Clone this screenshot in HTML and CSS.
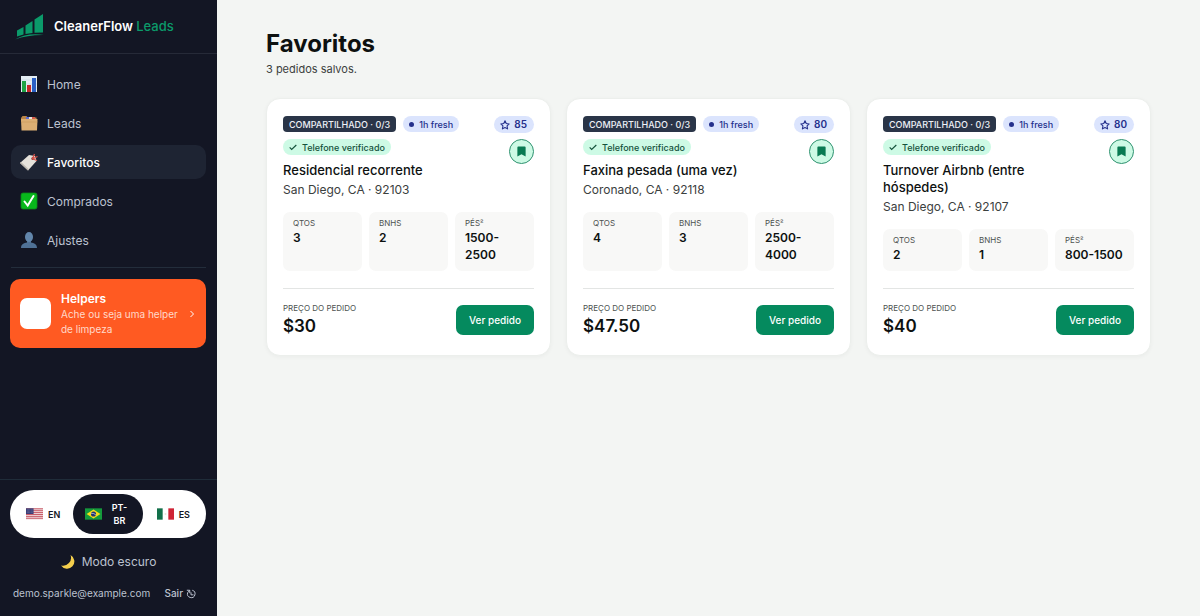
FILE: index.html
```html
<!DOCTYPE html>
<html lang="pt-BR">
<head>
    <meta charset="UTF-8">
    <meta name="viewport" content="width=device-width, initial-scale=1.0">
    <title>Favoritos - CleanerFlow Leads</title>
    <link rel="stylesheet" href="styles.css">
</head>
<body>
    <!-- shared icons -->
    <svg class="sprite" aria-hidden="true">
        <symbol id="i-star" viewBox="0 0 24 24">
            <path d="M12 2l3 6.500 7 .9-5.100 4.900 1.300 7L12 17.900l-6.200 3.400 1.300-7L2 9.400l7-.9z" fill="none" stroke="currentColor" stroke-width="2.600" stroke-linejoin="round"/>
        </symbol>
        <symbol id="i-bookmark" viewBox="0 0 24 24">
            <path d="M5 1h14a2 2 0 0 1 2 2v20l-9-5-9 5V3a2 2 0 0 1 2-2z" fill="currentColor"/>
        </symbol>
        <symbol id="i-check" viewBox="0 0 24 24">
            <path d="M2 13l6 6L22 6" fill="none" stroke="currentColor" stroke-width="3.500"/>
        </symbol>
    </svg>

    <div class="layout">
        <aside class="sidebar">
            <a class="brand" href="#">
                <svg class="brand-logo" viewBox="0 0 30 28" aria-hidden="true">
                    <g fill="#0b9a6a">
                        <path d="M2 17.500L8.500 14V21.500L2 23.500z"/>
                        <path d="M10.500 12.500L17.500 8V20L10.500 21z"/>
                        <path d="M19.500 6.500L28 1V19.500L19.500 19.800z"/>
                        <path d="M0 26.500Q12 19.500 29 22Q12 21.800 0 26.500z"/>
                    </g>
                </svg>
                <span>CleanerFlow <span class="brand-accent">Leads</span></span>
            </a>

            <nav class="nav">
                <a class="nav-item" href="#">
                    <svg class="nav-icon" viewBox="0 0 18 18" aria-hidden="true">
                        <rect x="1" y="1" width="16" height="16" fill="#e4eef4"/>
                        <path d="M1 5h16M1 9h16M1 13h16" stroke="#c3d5e0" stroke-width=".6"/>
                        <rect x="2" y="6" width="4" height="11" fill="#1fa345"/>
                        <rect x="7" y="10" width="4" height="7" fill="#c62828"/>
                        <rect x="12" y="3" width="4" height="14" fill="#2a5fc4"/>
                    </svg>
                    Home
                </a>
                <a class="nav-item" href="#">
                    <svg class="nav-icon" viewBox="0 0 18 18" aria-hidden="true">
                        <path d="M1 4l1.500-2h4L8 3.500h8.500V8H1z" fill="#b98448"/>
                        <path d="M6 3h3v3H6z" fill="#5e6fd0"/>
                        <path d="M9 3h3v3H9z" fill="#e8e2d8"/>
                        <path d="M12 3h3v3h-3z" fill="#d65a4a"/>
                        <path d="M1 5h16.500l-.5 11.500H1.500z" fill="#dcae73"/>
                        <path d="M1 8h16.500" stroke="#c9985c" stroke-width=".6"/>
                    </svg>
                    Leads
                </a>
                <a class="nav-item active" href="#" aria-current="page">
                    <svg class="nav-icon" viewBox="0 0 18 18" aria-hidden="true">
                        <path d="M0 10L9 2l6 1 1.500 5L8 17.500z" fill="#e5e1da"/>
                        <path d="M0 10l8 7.500 1-1L1 9z" fill="#bdb7ae"/>
                        <circle cx="12.800" cy="5.500" r="1.500" fill="#8e3b36"/>
                        <path d="M12.500 6l2-5M13 5.500l4.500-2M13 6l4 1.500" stroke="#d9534a" stroke-width="1.300" fill="none"/>
                    </svg>
                    Favoritos
                </a>
                <a class="nav-item" href="#">
                    <svg class="nav-icon" viewBox="0 0 18 18" aria-hidden="true">
                        <rect x="1" y="1" width="16" height="16" rx="2" fill="#08b81c" stroke="#0a8a1a" stroke-width=".8"/>
                        <path d="M4.500 9.500l3.200 4L13.500 4" stroke="#fff" stroke-width="2" fill="none" stroke-linecap="round"/>
                    </svg>
                    Comprados
                </a>
                <a class="nav-item" href="#">
                    <svg class="nav-icon" viewBox="0 0 18 18" aria-hidden="true">
                        <path d="M1 17c0-4 3-5 6-5.500V10h4v1.500c3 .5 6 1.500 6 5.500z" fill="#4f7196"/>
                        <ellipse cx="9" cy="6" rx="4" ry="5" fill="#6286ab"/>
                    </svg>
                    Ajustes
                </a>
            </nav>

            <a class="helpers" href="#">
                <span class="helpers-thumb"></span>
                <span class="helpers-text">
                    <strong>Helpers</strong>
                    <span>Ache ou seja uma helper de limpeza</span>
                </span>
                <svg class="helpers-arrow" viewBox="0 0 8 10" aria-hidden="true">
                    <path d="M2.500 2l3 3-3 3" fill="none" stroke="currentColor"/>
                </svg>
            </a>

            <div class="sidebar-footer">
                <div class="lang" role="group" aria-label="Idioma">
                    <button type="button" class="lang-btn">
                        <svg class="flag" viewBox="0 0 18 12" aria-hidden="true">
                            <rect width="18" height="12" fill="#f3dfe1"/>
                            <path d="M0 .5h18M0 2.500h18M0 4.500h18M0 6.500h18M0 8.500h18M0 10.500h18" stroke="#c4505e"/>
                            <rect width="8" height="6" fill="#3b3f78"/>
                            <path d="M1 1.500h6M1 3h6M1 4.500h6" stroke="#a5a8c8" stroke-width=".5" stroke-dasharray=".6 .8"/>
                        </svg>
                        <span>EN</span>
                    </button>
                    <button type="button" class="lang-btn selected" aria-pressed="true">
                        <svg class="flag" viewBox="0 0 18 12" aria-hidden="true">
                            <rect width="18" height="12" fill="#149a3c"/>
                            <path d="M9 1.200L16.300 6 9 10.800 1.700 6z" fill="#f8dc1c"/>
                            <circle cx="9" cy="6" r="2.700" fill="#21356f"/>
                            <path d="M6.500 5.300q2.800-.4 5 1.600" stroke="#fff" stroke-width=".6" fill="none"/>
                        </svg>
                        <span>PT-BR</span>
                    </button>
                    <button type="button" class="lang-btn">
                        <svg class="flag" viewBox="0 0 18 12" aria-hidden="true">
                            <rect width="18" height="12" fill="#fff"/>
                            <rect width="6" height="12" fill="#12704a"/>
                            <rect x="12" width="6" height="12" fill="#cf2436"/>
                            <circle cx="9" cy="6" r="1" fill="#e9e4da"/>
                        </svg>
                        <span>ES</span>
                    </button>
                </div>

                <button type="button" class="theme-btn">
                    <svg class="moon" viewBox="0 0 16 16" aria-hidden="true">
                        <path d="M10.500 1A7.300 7.300 0 1 1 1 11.500 8 8 0 0 0 10.500 1z" fill="#f5cf4d"/>
                    </svg>
                    Modo escuro
                </button>

                <div class="account">
                    <span class="email">demo.sparkle@example.com</span>
                    <button type="button" class="logout">
                        Sair
                        <svg viewBox="0 0 12 12" aria-hidden="true">
                            <path d="M2 4.500a4.500 4.500 0 1 0 5.500-3M1 1.500h3.500V5M4.500 1.500L2 4.500M6 4v3h3" fill="none" stroke="currentColor" stroke-width="1.200"/>
                        </svg>
                    </button>
                </div>
            </div>
        </aside>

        <main class="content">
            <h1>Favoritos</h1>
            <p class="subtitle">3 pedidos salvos.</p>

            <div class="cards">
                <article class="card">
                    <div class="card-head">
                        <div class="card-info">
                            <div class="badges">
                                <span class="badge badge-shared">COMPARTILHADO · 0/3</span>
                                <span class="badge badge-fresh">1h fresh</span>
                                <span class="badge badge-verified"><svg><use href="#i-check"/></svg>Telefone verificado</span>
                            </div>
                            <h2>Residencial recorrente</h2>
                            <p class="location">San Diego, CA · 92103</p>
                        </div>
                        <div class="card-side">
                            <span class="score"><svg><use href="#i-star"/></svg>85</span>
                            <button type="button" class="save-btn" aria-label="Remover dos favoritos"><svg><use href="#i-bookmark"/></svg></button>
                        </div>
                    </div>
                    <dl class="stats">
                        <div class="stat"><dt>QTOS</dt><dd>3</dd></div>
                        <div class="stat"><dt>BNHS</dt><dd>2</dd></div>
                        <div class="stat"><dt>PÉS²</dt><dd>1500-2500</dd></div>
                    </dl>
                    <div class="card-foot">
                        <div>
                            <div class="price-label">PREÇO DO PEDIDO</div>
                            <div class="price">$30</div>
                        </div>
                        <a class="view-btn" href="#">Ver pedido</a>
                    </div>
                </article>

                <article class="card">
                    <div class="card-head">
                        <div class="card-info">
                            <div class="badges">
                                <span class="badge badge-shared">COMPARTILHADO · 0/3</span>
                                <span class="badge badge-fresh">1h fresh</span>
                                <span class="badge badge-verified"><svg><use href="#i-check"/></svg>Telefone verificado</span>
                            </div>
                            <h2>Faxina pesada (uma vez)</h2>
                            <p class="location">Coronado, CA · 92118</p>
                        </div>
                        <div class="card-side">
                            <span class="score"><svg><use href="#i-star"/></svg>80</span>
                            <button type="button" class="save-btn" aria-label="Remover dos favoritos"><svg><use href="#i-bookmark"/></svg></button>
                        </div>
                    </div>
                    <dl class="stats">
                        <div class="stat"><dt>QTOS</dt><dd>4</dd></div>
                        <div class="stat"><dt>BNHS</dt><dd>3</dd></div>
                        <div class="stat"><dt>PÉS²</dt><dd>2500-4000</dd></div>
                    </dl>
                    <div class="card-foot">
                        <div>
                            <div class="price-label">PREÇO DO PEDIDO</div>
                            <div class="price">$47.50</div>
                        </div>
                        <a class="view-btn" href="#">Ver pedido</a>
                    </div>
                </article>

                <article class="card">
                    <div class="card-head">
                        <div class="card-info">
                            <div class="badges">
                                <span class="badge badge-shared">COMPARTILHADO · 0/3</span>
                                <span class="badge badge-fresh">1h fresh</span>
                                <span class="badge badge-verified"><svg><use href="#i-check"/></svg>Telefone verificado</span>
                            </div>
                            <h2>Turnover Airbnb (entre hóspedes)</h2>
                            <p class="location">San Diego, CA · 92107</p>
                        </div>
                        <div class="card-side">
                            <span class="score"><svg><use href="#i-star"/></svg>80</span>
                            <button type="button" class="save-btn" aria-label="Remover dos favoritos"><svg><use href="#i-bookmark"/></svg></button>
                        </div>
                    </div>
                    <dl class="stats">
                        <div class="stat"><dt>QTOS</dt><dd>2</dd></div>
                        <div class="stat"><dt>BNHS</dt><dd>1</dd></div>
                        <div class="stat"><dt>PÉS²</dt><dd>800-1500</dd></div>
                    </dl>
                    <div class="card-foot">
                        <div>
                            <div class="price-label">PREÇO DO PEDIDO</div>
                            <div class="price">$40</div>
                        </div>
                        <a class="view-btn" href="#">Ver pedido</a>
                    </div>
                </article>
            </div>
        </main>
    </div>
</body>
</html>
```
FILE: styles.css
```css
* {
    box-sizing: border-box;
    margin: 0;
    padding: 0;
}

body {
    font-family: Inter, "Liberation Sans", sans-serif;
    font-size: 12px;
    line-height: 17px;
    color: #0d1110;
    background: #f3f5f3;
}

a {
    color: inherit;
    text-decoration: none;
}

button {
    font: inherit;
    color: inherit;
    background: none;
    border: none;
    cursor: pointer;
}

svg {
    flex: none;
}

.sprite {
    display: none;
}

.layout {
    display: flex;
    min-height: 100vh;
}

/* sidebar */
.sidebar {
    flex: none;
    display: flex;
    flex-direction: column;
    width: 217px;
    background: #131624;
    color: #bcc2d0;
}

.brand {
    display: flex;
    align-items: center;
    gap: 9px;
    height: 54px;
    padding: 0 15px;
    border-bottom: 1px solid #262a38;
    font-size: 13px;
    font-weight: 600;
    color: #fff;
}

.brand-logo {
    width: 30px;
    height: 28px;
}

.brand-accent {
    color: #0b9a6a;
    font-weight: 500;
}

.nav {
    display: flex;
    flex-direction: column;
    gap: 5px;
    margin: 0 11px;
    padding: 13px 0 10px;
    border-bottom: 1px solid #232d3b;
}

.nav-item {
    display: flex;
    align-items: center;
    gap: 9px;
    height: 34px;
    padding: 0 9px;
    border-radius: 10px;
}

.nav-item.active {
    background: #1e2433;
    color: #fff;
    font-weight: 500;
}

.nav-icon {
    width: 18px;
    height: 18px;
}

.helpers {
    display: flex;
    align-items: center;
    gap: 10px;
    margin: 11px 11px 0 10px;
    padding: 11px 10px;
    border-radius: 10px;
    background: #ff5a22;
    color: #fff;
}

.helpers-thumb {
    flex: none;
    width: 31px;
    height: 31px;
    border-radius: 7px;
    background: #fff;
}

.helpers-text {
    flex: 1;
    font-size: 10px;
    line-height: 15px;
    color: #ffd9ca;
}

.helpers-text strong {
    display: block;
    font-size: 12px;
    line-height: 17px;
    font-weight: 600;
    color: #fff;
}

.helpers-arrow {
    width: 8px;
    height: 10px;
}

.sidebar-footer {
    margin-top: auto;
    padding: 10px 11px 10px 10px;
    border-top: 1px solid #1f2c39;
}

.lang {
    display: flex;
    justify-content: space-between;
    padding: 4px;
    border-radius: 24px;
    background: #fff;
    color: #131624;
}

.lang-btn {
    display: flex;
    align-items: center;
    gap: 5px;
    min-height: 40px;
    padding: 0 12px;
    border-radius: 20px;
    font-size: 9px;
    line-height: 13px;
    font-weight: 600;
}

.lang-btn.selected {
    width: 70px;
    background: #131624;
    color: #fff;
}

.lang-btn.selected span {
    flex: 1;
}

.flag {
    width: 17px;
    height: 12px;
}

.theme-btn {
    display: flex;
    align-items: center;
    gap: 6px;
    margin: 15px auto 0;
}

.moon {
    width: 16px;
    height: 16px;
}

.account {
    display: flex;
    justify-content: space-between;
    align-items: center;
    margin-top: 15px;
    padding: 0 0 4px 3px;
    font-size: 10px;
}

.logout {
    display: flex;
    align-items: center;
    gap: 3px;
    padding-right: 10px;
    font-weight: 500;
}

.logout svg {
    width: 10px;
    height: 10px;
}

/* page */
.content {
    flex: 1;
    padding: 27px 49px;
}

h1 {
    font-size: 24px;
    line-height: 33px;
    font-weight: 700;
}

.subtitle {
    margin-top: 1px;
    font-size: 11px;
    color: #3b403e;
}

.cards {
    display: grid;
    grid-template-columns: repeat(3, 1fr);
    gap: 15px;
    margin-top: 20px;
}

.card {
    display: flex;
    flex-direction: column;
    padding: 17px 16px 18px;
    border: 1px solid #ecefec;
    border-radius: 14px;
    background: #fff;
    box-shadow: 0 1px 4px rgba(0, 0, 0, 0.04);
}

.card-head {
    display: flex;
    gap: 8px;
}

.card-info {
    flex: 1;
}

.badges {
    display: flex;
    flex-wrap: wrap;
    gap: 7px;
}

.badge {
    display: inline-flex;
    align-items: center;
    gap: 5px;
    height: 16px;
    padding: 0 6px;
    border-radius: 8px;
    font-size: 9px;
    font-weight: 500;
}

.badge-shared {
    border-radius: 4px;
    background: #2a3548;
    color: #eef1f6;
}

.badge-fresh {
    background: #dbe4fd;
    color: #25308c;
}

.badge-fresh::before {
    content: "";
    width: 5px;
    height: 5px;
    border-radius: 50%;
    background: currentColor;
}

.badge-verified {
    background: #cdfae5;
    color: #14523c;
}

.badge-verified svg {
    width: 8px;
    height: 8px;
}

.card-side {
    display: flex;
    flex-direction: column;
    align-items: flex-end;
    gap: 6px;
}

.score {
    display: flex;
    align-items: center;
    gap: 4px;
    height: 17px;
    padding: 0 7px 0 6px;
    border-radius: 9px;
    background: #dbe4fd;
    color: #25308c;
    font-size: 10px;
    font-weight: 600;
}

.score svg {
    width: 10px;
    height: 10px;
}

.save-btn {
    display: flex;
    align-items: center;
    justify-content: center;
    width: 25px;
    height: 25px;
    border: 1px solid #2f9270;
    border-radius: 50%;
    background: #cdfae5;
    color: #087a52;
}

.save-btn svg {
    width: 11px;
    height: 11px;
}

h2 {
    margin-top: 7px;
    font-size: 13px;
    line-height: 17px;
    font-weight: 500;
}

.location {
    margin-top: 2px;
    color: #3b403e;
}

.stats {
    display: grid;
    grid-template-columns: repeat(3, 1fr);
    gap: 7px;
    margin: 14px 0 17px;
    flex: 1;
}

.stat {
    padding: 5px 10px 8px;
    border-radius: 7px;
    background: #f8f8f7;
}

.stat dt {
    font-size: 8px;
    line-height: 12px;
    color: #4c514f;
}

.stat dd {
    font-weight: 600;
}

.card-foot {
    display: flex;
    justify-content: space-between;
    align-items: center;
    padding-top: 13px;
    border-top: 1px solid #e3e5e4;
}

.price-label {
    font-size: 8px;
    line-height: 13px;
    color: #4c514f;
}

.price {
    font-size: 17px;
    line-height: 22px;
    font-weight: 600;
}

.view-btn {
    padding: 7px 13px;
    border-radius: 7px;
    background: #058a5e;
    color: #fff;
    font-size: 10px;
    line-height: 16px;
    font-weight: 500;
}
```
